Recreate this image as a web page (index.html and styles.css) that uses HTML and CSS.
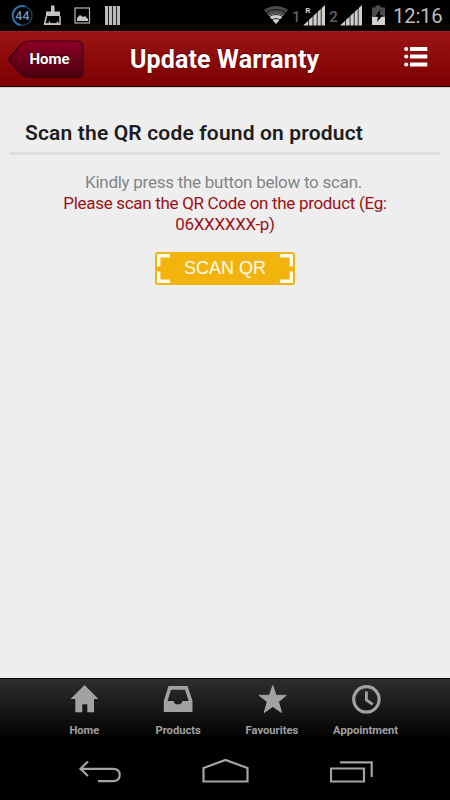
FILE: index.html
```html
<!DOCTYPE html>
<html lang="en">
<head>
<meta charset="utf-8">
<title>Update Warranty</title>
<link rel="stylesheet" href="styles.css">
</head>
<body>
<div class="status">
  <svg class="status-left" width="125" height="31" viewBox="0 0 125 31">
    <circle cx="22.3" cy="15.7" r="9.7" fill="none" stroke="#123d5e" stroke-width="1.6"/>
    <path d="M20.500 25.200A9.700 9.700 0 1 1 25.500 6.500" fill="none" stroke="#2878b5" stroke-width="1.8"/>
    <text class="battery-num" x="22.4" y="20" text-anchor="middle">44</text>
    <path d="M51 5.500h3.500v6H60v4.500H46v-4.500h5z" fill="#c4c4c4"/>
    <path d="M46.500 16L44.500 24H60V16" fill="none" stroke="#c4c4c4" stroke-width="1.5"/>
    <path d="M44 24.200H60.500M49.500 24v-2.500M57.500 24v-2.500" stroke="#c4c4c4" stroke-width="1.5"/>
    <rect x="75" y="8" width="14.5" height="15" fill="none" stroke="#b5b5b5" stroke-width="1.2"/>
    <path d="M77 21v-3l3-3 3 2 2-1 3 3v2z" fill="#c4c4c4"/>
    <path d="M105 6h3.200v19h-3.200zM109 6h3.200v19h-3.200zM113 6h3.200v19h-3.200zM117 6h3v19h-3z" fill="#bcbcbc"/>
  </svg>
  <svg class="status-right" width="128" height="31" viewBox="262 0 128 31">
    <path d="M264 10Q276 2.200 288 10L276 24z" fill="#4a4a4a"/>
    <path d="M268.800 15.800Q276 11.500 283.200 15.800L276 24z" fill="#cfcfcf"/>
    <path d="M265.500 13Q276 6 286.500 13M268.500 17Q276 12 283.500 17M271 20.200Q276 17 281 20.200" fill="none" stroke="#000" stroke-width=".8"/>
    <text class="sim" x="292" y="22">1</text>
    <path d="M303 25.500L325 5V25.500z" fill="#cfcfcf"/>
    <path d="M308.500 5v21M313 5v21M317.200 5v21M321.200 5v21" stroke="#000" stroke-width=".8"/>
    <text class="roam" x="305.3" y="13">R</text>
    <text class="sim" x="329.3" y="22">2</text>
    <path d="M340 25.500L362 5V25.500z" fill="#cfcfcf"/>
    <path d="M345.500 5v21M350 5v21M354.200 5v21M358.200 5v21" stroke="#000" stroke-width=".8"/>
    <path d="M375.500 5.500h5v2h4.500V25h-13V7.500h3.500z" fill="#4c4c4c"/>
    <path d="M372 17h13v8h-13z" fill="#d2d2d2"/>
    <path d="M380.500 9.500l-5.500 7h3l-1 5.500 6-7h-3.300z" fill="#050505"/>
  </svg>
  <span class="time">12:16</span>
</div>

<header class="topbar">
  <a class="back">
    <svg class="back-shape" width="78" height="39" viewBox="0 0 78 39">
      <defs><linearGradient id="wine" x2="0" y2="1"><stop stop-color="#8b0024"/><stop offset="1" stop-color="#4b0010"/></linearGradient></defs>
      <path d="M1 19.500L14 4.500Q17.500 1 21 1H70Q76 1 76 7V32Q76 37.500 70 37.500H21Q17.500 37.500 14 34z" fill="url(#wine)" stroke="#3c0712" stroke-width="1.2"/>
    </svg>
    <span class="back-label">Home</span>
  </a>
  <h1 class="title">Update Warranty</h1>
  <svg class="menu" width="24" height="22" viewBox="0 0 24 22">
    <path d="M6 1h17.300v4H6zM6 8.500h17.300v4H6zM6 16.500h17.300v4H6z" fill="#fff"/>
    <circle cx="2.2" cy="3" r="2.1" fill="#fff"/><circle cx="2.2" cy="10.5" r="2.1" fill="#fff"/><circle cx="2.2" cy="18.5" r="2.1" fill="#fff"/>
  </svg>
</header>

<main class="content">
  <h2 class="heading">Scan the QR code found on product</h2>
  <div class="info">
    <p class="hint">Kindly press the button below to scan.</p>
    <p class="note">Please scan the QR Code on the product (Eg:<br>06XXXXXX-p)</p>
  </div>
  <div class="scan">
    <svg class="corner" width="13" height="29" viewBox="0 0 13 29"><path d="M13 1.700H1.700V12.500M1.700 17.500V27.300H13" fill="none" stroke="#fffdf0" stroke-width="3.4"/></svg>
    <span class="scan-label">SCAN QR</span>
    <svg class="corner" width="13" height="29" viewBox="0 0 13 29"><path d="M0 1.700H11.300V12.500M11.300 17.500V27.300H0" fill="none" stroke="#fffdf0" stroke-width="3.4"/></svg>
  </div>
</main>

<nav class="tabs">
  <a class="tab">
    <svg width="30" height="30" viewBox="0 0 30 30"><path d="M15.500 1L29.500 15H25V28.300H18.300V20.300H13.300V28.300H6.300V15H1.500z" fill="#a2a2a2"/></svg>
    <span>Home</span>
  </a>
  <a class="tab">
    <svg width="30" height="30" viewBox="0 0 30 30"><path fill-rule="evenodd" d="M5.500 2H24.500L29.500 17V28H.8V17zM8 5.700L4.500 17H10.500Q11.500 20.300 13 20.300H17Q18.500 20.300 19.500 17H25.700L22 5.700z" fill="#a2a2a2"/></svg>
    <span>Products</span>
  </a>
  <a class="tab">
    <svg width="30" height="30" viewBox="0 0 30 30"><path d="M15.800 1.500L19 11.300H29.300L21.500 17.700L24.500 28.500L15.800 22.500L7.300 28.500L10.300 17.700L2 11.300H12.500z" fill="#a2a2a2" stroke="#a2a2a2" stroke-width="1" stroke-linejoin="round"/></svg>
    <span>Favourites</span>
  </a>
  <a class="tab">
    <svg width="30" height="30" viewBox="0 0 30 30"><circle cx="15.400" cy="15.300" r="12.700" fill="none" stroke="#a2a2a2" stroke-width="3.2"/><path d="M15.400 7.500V16L21.700 20.300" fill="none" stroke="#a2a2a2" stroke-width="2.8"/></svg>
    <span>Appointment</span>
  </a>
</nav>

<div class="system">
  <svg width="42" height="25" viewBox="79 758 42 25"><path d="M88 761.500L80.500 768.800L88 776M80.500 768.800H113Q119.700 768.800 119.700 775T113 781.200H98" fill="none" stroke="#a3a3a3" stroke-width="2.2"/></svg>
  <svg width="48" height="25" viewBox="201.500 758 48 25"><path d="M203 768L225 760L247 768V781.500H203z" fill="none" stroke="#a3a3a3" stroke-width="2.2"/></svg>
  <svg width="44" height="25" viewBox="330 758 44 25"><path d="M331 768.500H364V781.500H331zM340 762.300H371.700V777" fill="none" stroke="#a3a3a3" stroke-width="2.2"/></svg>
</div>
</body>
</html>
```
FILE: styles.css
```css
* { box-sizing: border-box; }
body {
  margin: 0;
  width: 450px;
  height: 800px;
  display: flex;
  flex-direction: column;
  background: #000;
  font-family: Roboto, "Liberation Sans", sans-serif;
  overflow: hidden;
}
h1, h2, p { margin: 0; }
svg { display: block; flex: none; }

.status { height: 31px; flex: none; display: flex; align-items: center; }
.status-right { margin-left: 137px; }
.battery-num { font-size: 12.5px; font-weight: 500; fill: #6797bd; }
.sim { font-size: 15px; font-weight: 500; fill: #606060; }
.roam { font-size: 8px; font-weight: 700; fill: #d0d0d0; }
.time { margin-left: 3px; padding-top: 2px; font-size: 20.3px; letter-spacing: -.2px; line-height: 29px; color: #bebebe; white-space: nowrap; }

.topbar {
  height: 56px;
  flex: none;
  display: flex;
  align-items: center;
  background: linear-gradient(#9b1414, #7d0000);
  border-top: 1px solid #a12020;
  border-bottom: 1px solid #250000;
}
.back { display: grid; width: 78px; margin-left: 7px; align-items: center; }
.back-shape, .back-label { grid-area: 1 / 1; }
.back-label { padding-left: 22.5px; font-size: 15px; font-weight: 700; color: #fff; text-shadow: 0 -1px 0 #38000c; }
.title {
  width: 190px;
  margin-left: 45px;
  padding-top: 1px;
  font-size: 25px;
  font-weight: 700;
  letter-spacing: .13px;
  line-height: 53px;
  color: #fff;
  white-space: nowrap;
  text-shadow: 0 -1px 1px #500;
}
.menu { margin-left: 84px; margin-bottom: 4px; }

.content {
  flex: 1;
  background: #eee;
  border-top: 1px solid #ccc;
  padding: 0 10px;
  display: flex;
  flex-direction: column;
  align-items: center;
}
.heading {
  width: 430px;
  height: 67px;
  padding: 29px 0 0 15px;
  border-bottom: 3px solid #ddd;
  font-size: 21px;
  font-weight: 600;
  letter-spacing: .16px;
  line-height: 32px;
  color: #1d1d1d;
  white-space: nowrap;
}
.info { margin-top: 17px; font-size: 17px; line-height: 21px; text-align: center; white-space: nowrap; }
.hint { color: #858585; letter-spacing: -.26px; margin-left: -3px; }
.note { color: #9d1015; letter-spacing: -.31px; }
.scan {
  width: 140px;
  height: 33px;
  margin-top: 17px;
  padding: 0 2px;
  display: flex;
  align-items: center;
  justify-content: space-between;
  border-radius: 3px;
  background: #f2b30d;
}
.scan-label { font: 18px "Liberation Sans", sans-serif; color: #fffdf0; white-space: nowrap; }

.tabs {
  height: 62px;
  flex: none;
  padding: 5px 37.5px 0;
  display: grid;
  grid-template-columns: repeat(4, 1fr);
  background: linear-gradient(#2e2e2e, #000);
  border-top: 1px solid #000;
}
.tab {
  display: flex;
  flex-direction: column;
  align-items: center;
  font-size: 11.2px;
  font-weight: 700;
  line-height: 14px;
  color: #a0a0a0;
}
.tab span { margin-top: 10px; }
.system {
  height: 60px;
  flex: none;
  padding: 18px 76px 0 79px;
  display: flex;
  justify-content: space-between;
}
```
